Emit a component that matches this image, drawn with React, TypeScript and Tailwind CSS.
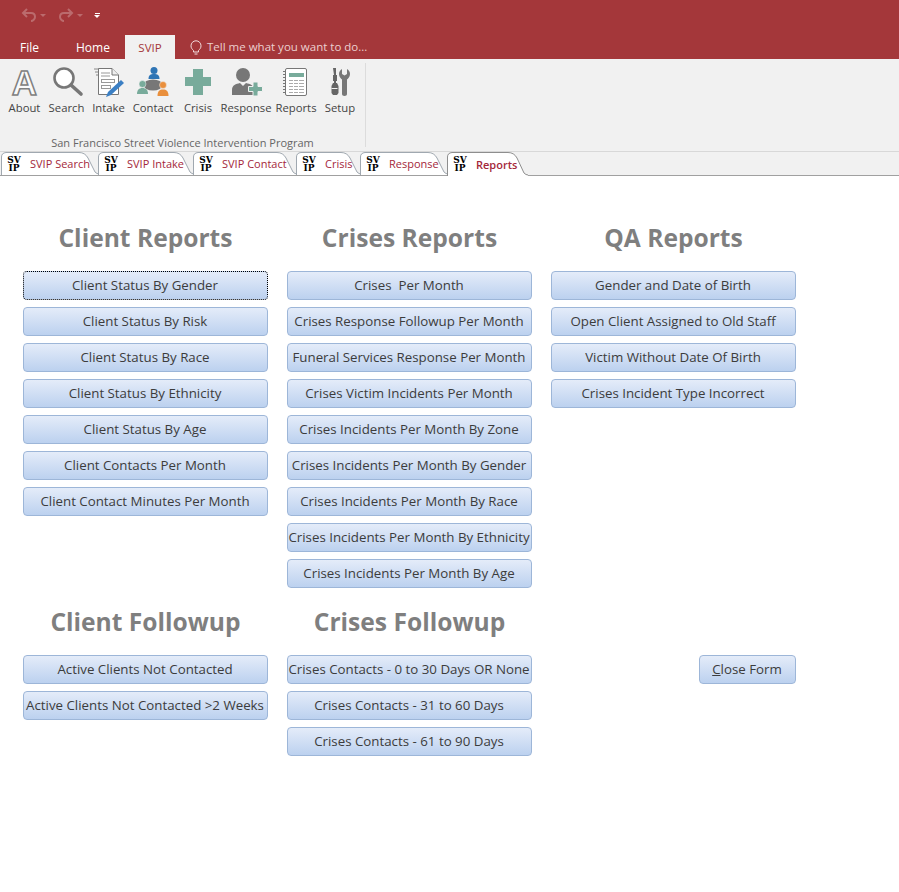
import React from "react";

const ui = "font-['Open_Sans',sans-serif]";

function AboutIcon() {
  return (
    <div className="h-[32px] w-[40px] flex justify-center">
      <span className="font-['Liberation_Sans',sans-serif] font-bold text-[35px] leading-[35px] text-[#fafafa] [-webkit-text-stroke:1.5px_#808080]">
        A
      </span>
    </div>
  );
}

function SearchIcon() {
  return (
    <svg width="40" height="32" viewBox="0 0 40 32" fill="none">
      <circle cx="17" cy="13" r="9.5" stroke="#777" strokeWidth="2.6" fill="#fff" />
      <path d="M24 20 L34 29" stroke="#777" strokeWidth="3.6" strokeLinecap="round" />
    </svg>
  );
}

function IntakeIcon() {
  return (
    <svg width="40" height="32" viewBox="0 0 40 32" fill="none">
      <path d="M5 4h5M6 7h4M7 10h3" stroke="#888" strokeWidth="1" />
      <path d="M9.5 3.5H23L29.5 10V29.5H9.5Z" fill="#fff" stroke="#777" strokeWidth="1" />
      <path d="M23 3.500V10H29.500" fill="#eee" stroke="#777" strokeWidth="1" />
      <path d="M12 8h9M12 11h9" stroke="#999" strokeWidth="1" />
      <rect x="12.500" y="14.500" width="13" height="3" stroke="#999" />
      <rect x="12.500" y="20.500" width="9" height="3" stroke="#999" />
      <path d="M17 32 L19 27 L32 15 L35 18 L22 30 Z" fill="#3b7fc4" />
    </svg>
  );
}

function ContactIcon() {
  return (
    <svg width="40" height="32" viewBox="0 0 40 32" fill="none">
      <ellipse cx="20" cy="20" rx="9.500" ry="5.500" fill="#777" />
      <circle cx="21" cy="5.500" r="3.500" fill="#2f75b5" />
      <path d="M15.500 14c0-4 2-5 5.500-5s5.500 1 5.500 5Z" fill="#2f75b5" />
      <circle cx="9.500" cy="19" r="3.500" fill="#78ab9b" stroke="#f1f1f1" strokeWidth="0.500" />
      <path d="M4 29c0-4 2-6 5.500-6s5.500 2 5.500 6Z" fill="#78ab9b" />
      <circle cx="30" cy="20" r="3.500" fill="#e98f3c" stroke="#f1f1f1" strokeWidth="0.500" />
      <path d="M24.500 31c0-5 2-6.500 5.500-6.500S35.500 26 35.500 31Z" fill="#e98f3c" />
    </svg>
  );
}

function CrisisIcon() {
  return (
    <svg width="42" height="32" viewBox="0 0 42 32">
      <path d="M16 4H26V12H34V21H26V30H16V21H8V12H16Z" fill="#78ab9b" />
    </svg>
  );
}

function ResponseIcon() {
  return (
    <svg width="54" height="32" viewBox="0 0 54 32">
      <circle cx="24" cy="10" r="7" fill="#777" />
      <path d="M13 30V25C13 20 17 19 21 18L24 21L27 18C31 19 35 20 35 25V30Z" fill="#777" />
      <path d="M34 22H39V26.500H43.500V31.500H39V36H34V31.500H29.500V26.500H34Z" fill="#78ab9b" stroke="#f1f1f1" transform="translate(0 -5)" />
    </svg>
  );
}

function ReportsIcon() {
  return (
    <svg width="46" height="32" viewBox="0 0 46 32" fill="none">
      <rect x="12.500" y="3.500" width="21" height="27" rx="1.500" fill="#fff" stroke="#777" />
      <path d="M11 6v1M11 9v1M11 12v1M11 15v1M11 18v1M11 21v1M11 24v1M11 27v1" stroke="#777" strokeWidth="2" />
      <rect x="16" y="8" width="15" height="4" fill="#78ab9b" />
      <path d="M16 15.500h15M16 18.500h15M16 21.500h15M16 24.500h15M16 27.500h15" stroke="#aaa" />
      <path d="M20.500 15v13M25.500 15v13" stroke="#fff" />
    </svg>
  );
}

function SetupIcon() {
  return (
    <svg width="42" height="32" viewBox="0 0 42 32">
      <path d="M14 3h3v7h1v6h-1v2h1l1.500 3v7l-1.500 2h-4l-1.500-2v-7l1.500-3h1v-2h-1v-6h1Z" fill="#666" />
      <path d="M12.500 23.500h6" stroke="#f1f1f1" />
      <path d="M23 4c-2 1-3 3-3 5 0 3 2 4.500 3 5.500V29c0 1 1 2 2.500 2s2.500-1 2.500-2V14.500c1-1 3-2.500 3-5.500 0-2-1-4-3-5v5l-2.500 1.500L23 9Z" fill="#777" />
    </svg>
  );
}

const ribbonItems = [
  { label: "About", width: "w-[41px]", icon: <AboutIcon /> },
  { label: "Search", width: "w-[43px]", icon: <SearchIcon /> },
  { label: "Intake", width: "w-[41px]", icon: <IntakeIcon /> },
  { label: "Contact", width: "w-[48px]", icon: <ContactIcon /> },
  { label: "Crisis", width: "w-[42px]", icon: <CrisisIcon /> },
  { label: "Response", width: "w-[54px]", icon: <ResponseIcon /> },
  { label: "Reports", width: "w-[46px]", icon: <ReportsIcon /> },
  { label: "Setup", width: "w-[42px]", icon: <SetupIcon /> },
];

const tabs = [
  { label: "SVIP Search", w: 97 },
  { label: "SVIP Intake", w: 95 },
  { label: "SVIP Contact", w: 103 },
  { label: "Crisis", w: 64 },
  { label: "Response", w: 87 },
];

function SvipMark() {
  return (
    <span className="font-['DejaVu_Serif',serif] font-bold text-[9px] leading-[8px] text-black flex flex-col items-center w-[16px] shrink-0">
      <span>SV</span>
      <span>IP</span>
    </span>
  );
}

function DocTab({ label, w, active }: { label: string; w: number; active?: boolean }) {
  const h = active ? 24 : 23;
  const slope = active ? w - 1 : w + 1;
  const outline = `M0.500 ${h} V5 Q0.500 1 5 0.500 H${slope - 20} Q${slope - 14} 0.500 ${slope - 11} 6 L${slope - 4} ${h - 3} Q${slope - 2} ${h - 1} ${slope} ${h - 1}`;
  return (
    <div className="relative shrink-0 flex items-center pl-[5px]" style={{ width: w, height: h }}>
      <svg className="absolute left-0 top-0 overflow-visible" width={w} height={h} fill="none">
        <path d={`${outline} V${h} H0 Z`} fill="#fff" stroke="none" />
        <path d={outline} stroke={active ? "#8e8e8e" : "#a0a8b0"} strokeWidth="1" />
      </svg>
      <div className="relative flex items-center gap-[8px]">
        <SvipMark />
        <span className={`text-[11px] leading-none whitespace-nowrap text-[#a4273a] ${active ? "font-semibold" : ""}`}>
          {label}
        </span>
      </div>
    </div>
  );
}

function FormButton({ label, focused }: { label: string; focused?: boolean }) {
  return (
    <button
      className={`h-[29px] w-[245px] pr-[1px] rounded-[4px] border bg-gradient-to-b from-[#e4ecf9] to-[#bcd1ef] text-[13.300px] whitespace-pre text-[#3c3c3c] font-['Open_Sans',sans-serif] ${
        focused ? "border-dotted border-black" : "border-[#9db6d8]"
      }`}
    >
      {label}
    </button>
  );
}

function ButtonColumn({ title, items, focusFirst }: { title: string; items: string[]; focusFirst?: boolean }) {
  return (
    <div className="w-[245px] flex flex-col">
      <h2 className="h-[33px] mb-[17px] text-center text-[#7f7f7f] font-bold text-[24.600px] leading-[33px] whitespace-nowrap font-['Open_Sans',sans-serif]">
        {title}
      </h2>
      <div className="flex flex-col gap-[7px]">
        {items.map((item, idx) => (
          <FormButton key={item} label={item} focused={focusFirst && idx === 0} />
        ))}
      </div>
    </div>
  );
}

export default function App() {
  return (
    <div className={`min-h-[892px] bg-white ${ui}`}>
      {/* Title bar */}
      <div className="h-[35px] bg-[#a4373a] flex items-start pt-[8px] pl-[21px] gap-[3px]">
        <svg width="16" height="14" viewBox="0 0 16 14" fill="none" stroke="#bb6b6d" strokeWidth="2">
          <path d="M6 1 L2 5 L6 9 M2 5 H10 C13 5 14 7 14 9 C14 11 12 13 10 13" />
        </svg>
        <span className="w-0 h-0 mt-[6px] border-x-[3px] border-x-transparent border-t-[3px] border-t-[#bb6b6d] mr-[9px]" />
        <svg width="16" height="14" viewBox="0 0 16 14" fill="none" stroke="#bb6b6d" strokeWidth="2">
          <path d="M10 1 L14 5 L10 9 M14 5 H6 C3 5 2 7 2 9 C2 11 4 13 6 13" />
        </svg>
        <span className="w-0 h-0 mt-[6px] border-x-[3px] border-x-transparent border-t-[3px] border-t-[#bb6b6d] mr-[8px]" />
        <div className="flex flex-col items-center gap-[1px] mt-[5px]">
          <span className="w-[5px] h-[1px] bg-white" />
          <span className="w-0 h-0 border-x-[3px] border-x-transparent border-t-[3px] border-t-white" />
        </div>
      </div>

      {/* Ribbon tabs */}
      <div className="h-[24px] bg-[#a4373a] flex items-stretch text-[12px] text-white">
        <span className="ml-[20px] w-[56px] leading-[25px]">File</span>
        <span className="w-[49px] leading-[25px]">Home</span>
        <span className="w-[50px] bg-[#f1f1f1] text-[#a4373a] text-center text-[11.500px] leading-[25px]">SVIP</span>
        <div className="ml-[15px] flex items-center gap-[5px] text-[#eccfcf]">
          <svg width="12" height="15" viewBox="0 0 12 15" fill="none" stroke="#f3dede" strokeWidth="1">
            <path d="M3.500 10.500C2 9 1 8 1 5.800A5 5 0 0 1 11 5.800C11 8 10 9 8.500 10.500V12H3.500Z" />
            <path d="M4.500 14H7.500" />
          </svg>
          <span className="whitespace-nowrap text-[11.500px]">Tell me what you want to do...</span>
        </div>
      </div>

      {/* Ribbon */}
      <div className="h-[93px] bg-[#f1f1f1] border-b border-[#d8d8d8] flex">
        <div className="pl-[4px] w-[366px] border-r border-[#dcdcdc] mt-[4px] mb-[4px] flex flex-col">
          <div className="flex pt-[2px]">
            {ribbonItems.map((item) => (
              <div key={item.label} className={`${item.width} flex flex-col items-center shrink-0`}>
                <div className="h-[32px] flex justify-center">{item.icon}</div>
                <span className="text-[11.300px] leading-[16px] mt-[3px] text-[#444] whitespace-nowrap">{item.label}</span>
              </div>
            ))}
          </div>
          <div className="mt-auto w-[357px] text-center text-[11px] leading-[14px] mb-[-3px] text-[#666] whitespace-nowrap">
            San Francisco Street Violence Intervention Program
          </div>
        </div>
      </div>

      {/* Document tabs */}
      <div className="h-[24px] bg-[#f1f1f1] flex items-start pl-[1px] border-b border-[#a0a0a0]">
        {tabs.map((tab) => (
          <DocTab key={tab.label} label={tab.label} w={tab.w} />
        ))}
        <DocTab label="Reports" w={82} active />
      </div>

      {/* Form body */}
      <div className="pl-[23px] pt-[45px]">
        <div className="flex gap-[19px]">
          <ButtonColumn
            title="Client Reports"
            focusFirst
            items={[
              "Client Status By Gender",
              "Client Status By Risk",
              "Client Status By Race",
              "Client Status By Ethnicity",
              "Client Status By Age",
              "Client Contacts Per Month",
              "Client Contact Minutes Per Month",
            ]}
          />
          <ButtonColumn
            title="Crises Reports"
            items={[
              "Crises  Per Month",
              "Crises Response Followup Per Month",
              "Funeral Services Response Per Month",
              "Crises Victim Incidents Per Month",
              "Crises Incidents Per Month By Zone",
              "Crises Incidents Per Month By Gender",
              "Crises Incidents Per Month By Race",
              "Crises Incidents Per Month By Ethnicity",
              "Crises Incidents Per Month By Age",
            ]}
          />
          <ButtonColumn
            title="QA Reports"
            items={[
              "Gender and Date of Birth",
              "Open Client Assigned to Old Staff",
              "Victim Without Date Of Birth",
              "Crises Incident Type Incorrect",
            ]}
          />
        </div>

        <div className="flex gap-[19px] mt-[17px]">
          <ButtonColumn
            title="Client Followup"
            items={["Active Clients Not Contacted", "Active Clients Not Contacted >2 Weeks"]}
          />
          <ButtonColumn
            title="Crises Followup"
            items={[
              "Crises Contacts - 0 to 30 Days OR None",
              "Crises Contacts - 31 to 60 Days",
              "Crises Contacts - 61 to 90 Days",
            ]}
          />
          <div className="w-[245px] flex justify-end pt-[50px]">
            <button className="h-[29px] w-[97px] pr-[1px] rounded-[4px] border border-[#9db6d8] bg-gradient-to-b from-[#e4ecf9] to-[#bcd1ef] text-[13.300px] text-[#3c3c3c]">
              <span className="underline">C</span>lose Form
            </button>
          </div>
        </div>
      </div>
    </div>
  );
}
